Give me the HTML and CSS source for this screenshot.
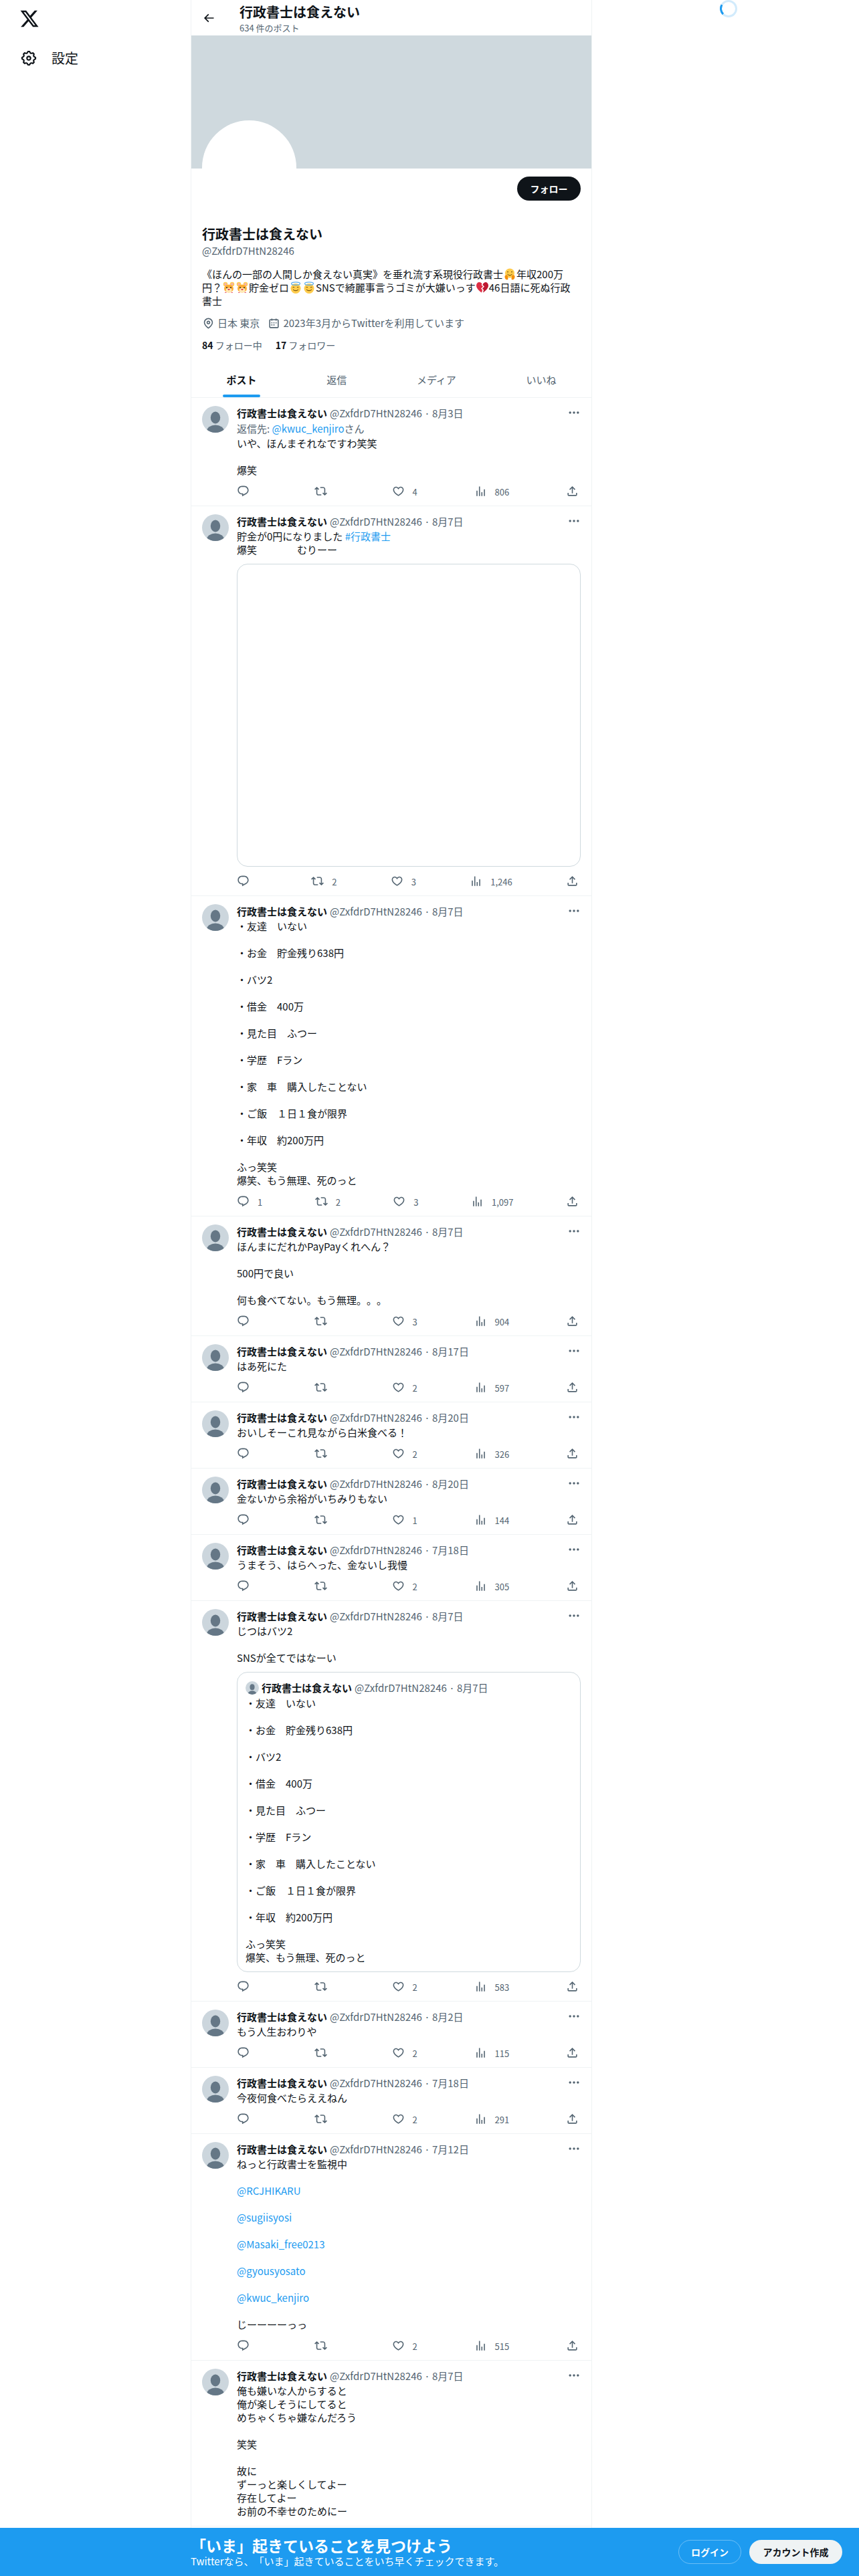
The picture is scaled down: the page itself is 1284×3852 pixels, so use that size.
FILE: index.html
```html
<!DOCTYPE html>
<html lang="ja">
<head>
    <meta charset="UTF-8">
    <meta name="viewport" content="width=device-width, initial-scale=1.0">
    <title>行政書士は食えない</title>
    <link rel="stylesheet" href="styles.css">
</head>
<body>
    <!-- icon sprite -->
    <svg class="sprite" aria-hidden="true">
        <symbol id="i-x" viewBox="0 0 24 24"><path d="M18.244 2.25h3.308l-7.227 8.26 8.502 11.24H16.17l-5.214-6.817L4.99 21.75H1.68l7.73-8.835L1.254 2.25H8.08l4.713 6.231zm-1.161 17.52h1.833L7.084 4.126H5.117z"/></symbol>
        <symbol id="i-gear" viewBox="0 0 24 24"><path d="M10.54 1.75h2.92l1.57 2.36c.11.17.32.25.53.21l2.53-.59 2.17 2.17-.58 2.54c-.05.2.04.41.21.53l2.36 1.57v2.92l-2.36 1.57c-.17.12-.26.33-.21.53l.58 2.54-2.17 2.17-2.53-.59c-.21-.04-.42.04-.53.21l-1.57 2.36h-2.92l-1.58-2.36c-.11-.17-.32-.25-.52-.21l-2.54.59-2.17-2.17.58-2.54c.05-.2-.03-.41-.21-.53l-2.35-1.57v-2.92L4.1 8.97c.18-.12.26-.33.21-.53L3.73 5.9 5.9 3.73l2.54.59c.2.04.41-.04.52-.21l1.58-2.36zm1.07 2l-.98 1.47C10.05 6.08 9 6.5 7.99 6.27l-1.46-.34-.6.6.33 1.46c.24 1.01-.18 2.07-1.05 2.64l-1.46.98v.78l1.46.98c.87.57 1.29 1.63 1.05 2.64l-.33 1.46.6.6 1.46-.34c1.01-.23 2.06.19 2.64 1.05l.98 1.47h.78l.97-1.47c.58-.86 1.63-1.28 2.65-1.05l1.45.34.61-.6-.34-1.46c-.23-1.01.18-2.07 1.05-2.64l1.47-.98v-.78l-1.47-.98c-.87-.57-1.28-1.63-1.05-2.64l.34-1.46-.61-.6-1.45.34c-1.02.23-2.07-.19-2.65-1.05l-.97-1.47h-.78zM12 10.5c-.83 0-1.5.67-1.5 1.5s.67 1.5 1.5 1.5c.82 0 1.5-.67 1.5-1.5s-.68-1.5-1.5-1.5zM8.5 12c0-1.93 1.56-3.5 3.5-3.5 1.93 0 3.5 1.57 3.5 3.5s-1.57 3.5-3.5 3.5c-1.94 0-3.5-1.57-3.5-3.5z"/></symbol>
        <symbol id="i-back" viewBox="0 0 24 24"><path d="M7.414 13l5.043 5.04-1.414 1.42L3.586 12l7.457-7.46 1.414 1.42L7.414 11H21v2H7.414z"/></symbol>
        <symbol id="i-pin" viewBox="0 0 24 24"><path d="M12 7c-1.93 0-3.5 1.57-3.5 3.5S10.07 14 12 14s3.5-1.57 3.5-3.5S13.93 7 12 7zm0 5c-.827 0-1.5-.673-1.5-1.5S11.173 9 12 9s1.5.673 1.5 1.5S12.827 12 12 12zm0-10c-4.687 0-8.5 3.813-8.5 8.5 0 5.967 7.621 11.116 7.945 11.332l.555.37.555-.37c.324-.216 7.945-5.365 7.945-11.332C20.5 5.813 16.687 2 12 2zm0 17.77c-1.665-1.241-6.5-5.196-6.5-9.27C5.5 6.916 8.416 4 12 4s6.5 2.916 6.5 6.5c0 4.073-4.835 8.028-6.5 9.27z"/></symbol>
        <symbol id="i-cal" viewBox="0 0 24 24"><path d="M7 4V3h2v1h6V3h2v1h1.5C19.89 4 21 5.12 21 6.5v12c0 1.38-1.11 2.5-2.5 2.5h-13C4.12 21 3 19.88 3 18.5v-12C3 5.12 4.12 4 5.5 4H7zm0 2H5.5c-.27 0-.5.22-.5.5v12c0 .28.23.5.5.5h13c.28 0 .5-.22.5-.5v-12c0-.28-.22-.5-.5-.5H17v1h-2V6H9v1H7V6zm0 6h2v-2H7v2zm0 4h2v-2H7v2zm4-4h2v-2h-2v2zm0 4h2v-2h-2v2zm4-4h2v-2h-2v2z"/></symbol>
        <symbol id="i-reply" viewBox="0 0 24 24"><path d="M1.751 10c0-4.42 3.584-8 8.005-8h4.366c4.49 0 8.129 3.64 8.129 8.13 0 2.96-1.607 5.68-4.196 7.11l-8.054 4.46v-3.69h-.067c-4.49.1-8.183-3.51-8.183-8.01zm8.005-6c-3.317 0-6.005 2.69-6.005 6 0 3.37 2.77 6.08 6.138 6.01l.351-.01h1.761v2.3l5.087-2.81c1.951-1.08 3.163-3.13 3.163-5.36 0-3.39-2.744-6.13-6.129-6.13H9.756z"/></symbol>
        <symbol id="i-rt" viewBox="0 0 24 24"><path d="M4.5 3.88l4.432 4.14-1.364 1.46L5.5 7.55V16c0 1.1.896 2 2 2H13v2H7.5c-2.209 0-4-1.79-4-4V7.55L1.432 9.48.068 8.02 4.5 3.88zM16.5 6H11V4h5.5c2.209 0 4 1.79 4 4v8.45l2.068-1.93 1.364 1.46-4.432 4.14-4.432-4.14 1.364-1.46 2.068 1.93V8c0-1.1-.896-2-2-2z"/></symbol>
        <symbol id="i-like" viewBox="0 0 24 24"><path d="M16.697 5.5c-1.222-.06-2.679.51-3.89 2.16l-.805 1.09-.806-1.09C9.984 6.01 8.526 5.44 7.304 5.5c-1.243.07-2.349.78-2.91 1.91-.552 1.12-.633 2.78.479 4.82 1.074 1.97 3.257 4.27 7.129 6.61 3.87-2.34 6.052-4.64 7.126-6.61 1.111-2.04 1.03-3.7.477-4.82-.561-1.13-1.666-1.84-2.908-1.91zm4.187 7.69c-1.351 2.48-4.001 5.12-8.379 7.67l-.503.3-.504-.3c-4.379-2.55-7.029-5.19-8.382-7.67-1.36-2.5-1.41-4.86-.514-6.67.887-1.79 2.647-2.91 4.601-3.01 1.651-.09 3.368.56 4.798 2.01 1.429-1.45 3.146-2.1 4.796-2.01 1.954.1 3.714 1.22 4.601 3.01.896 1.81.846 4.17-.514 6.67z"/></symbol>
        <symbol id="i-views" viewBox="0 0 24 24"><path d="M8.75 21V3h2v18h-2zM18 21V8.5h2V21h-2zM4 21l.004-10h2L6 21H4zm9.248 0v-7h2v7h-2z"/></symbol>
        <symbol id="i-share" viewBox="0 0 24 24"><path d="M12 2.59l5.7 5.7-1.41 1.42L13 6.41V16h-2V6.41l-3.3 3.3-1.41-1.42L12 2.59zM21 15l-.02 3.51c0 1.38-1.12 2.49-2.5 2.49H5.5C4.11 21 3 19.88 3 18.5V15h2v3.5c0 .28.22.5.5.5h12.98c.28 0 .5-.22.5-.5L19 15h2z"/></symbol>
        <symbol id="i-dots" viewBox="0 0 24 24"><path d="M3 12c0-1.1.9-2 2-2s2 .9 2 2-.9 2-2 2-2-.9-2-2zm9 2c1.1 0 2-.9 2-2s-.9-2-2-2-2 .9-2 2 .9 2 2 2zm7 0c1.1 0 2-.9 2-2s-.9-2-2-2-2 .9-2 2 .9 2 2 2z"/></symbol>
        <symbol id="i-user" viewBox="0 0 40 40"><rect width="40" height="40" fill="#ccd6dd"/><ellipse cx="20" cy="17.5" rx="7.2" ry="9" fill="#657786"/><ellipse cx="20" cy="38" rx="13" ry="9.5" fill="#657786"/></symbol>
        <symbol id="e-hug" viewBox="0 0 36 36"><circle cx="18" cy="15" r="14" fill="#ffcc4d"/><path d="M10 12q2-3 4 0M22 12q2-3 4 0M11 18q7 7 14 0" fill="none" stroke="#664500" stroke-width="2"/><path d="M3 25c0-6 8-6 9-1l1 8c0 4-10 4-10-7zM33 25c0-6-8-6-9-1l-1 8c0 4 10 4 10-7z" fill="#f4900c"/></symbol>
        <symbol id="e-ham" viewBox="0 0 36 36"><circle cx="8" cy="8" r="6.5" fill="#ffcc4d"/><circle cx="28" cy="8" r="6.5" fill="#ffcc4d"/><circle cx="8" cy="8" r="3.5" fill="#f4abba"/><circle cx="28" cy="8" r="3.5" fill="#f4abba"/><ellipse cx="18" cy="21" rx="14" ry="12" fill="#ffac33"/><ellipse cx="18" cy="26" rx="9" ry="7" fill="#ffe8b6"/><circle cx="12" cy="18" r="2" fill="#292f33"/><circle cx="24" cy="18" r="2" fill="#292f33"/><path d="M15 23h6l-3 3zM6 33h5M25 33h5" fill="#dd2e44" stroke="#dd2e44" stroke-width="1.5"/></symbol>
        <symbol id="e-angel" viewBox="0 0 36 36"><circle cx="18" cy="21" r="15" fill="#ffcc4d"/><ellipse cx="18" cy="6" rx="13" ry="4.5" fill="none" stroke="#5dadec" stroke-width="2.5"/><path d="M9 18q2.5-3 5 0M22 18q2.5-3 5 0M10 24q8 7 16 0" fill="none" stroke="#664500" stroke-width="2"/></symbol>
        <symbol id="e-heart" viewBox="0 0 36 36"><path d="M17 7C14 2 10 2 8 2 4 2 0 6 0 12c0 9 10 17 16 21l2-8-4-4 6-6-5-5z" fill="#dd2e44"/><path d="M20 7c3-4 6-5 8-5 4 0 8 4 8 10 0 9-10 17-16 21l2-8-4-4 6-6-5-5z" fill="#be1931"/></symbol>
    </svg>

    <div class="layout">
        <aside class="side">
            <svg class="logo"><use href="#i-x"/></svg>
            <div class="nav-item">
                <svg class="nav-icon"><use href="#i-gear"/></svg>
                <span>設定</span>
            </div>
        </aside>

        <main class="column">
            <header class="top">
                <svg class="back"><use href="#i-back"/></svg>
                <div>
                    <div class="top-name">行政書士は食えない</div>
                    <div class="top-sub">634 件のポスト</div>
                </div>
            </header>

            <div class="banner"></div>
            <div class="big-avatar"></div>

            <section class="profile">
                <div class="follow-row"><span class="follow-btn">フォロー</span></div>
                <div class="p-name">行政書士は食えない</div>
                <div class="p-handle">@ZxfdrD7HtN28246</div>
                <div class="p-bio">《ほんの一部の人間しか食えない真実》を垂れ流す系現役行政書士<svg class="emoji"><use href="#e-hug"/></svg>年収200万円？<svg class="emoji"><use href="#e-ham"/></svg><svg class="emoji"><use href="#e-ham"/></svg>貯金ゼロ<svg class="emoji"><use href="#e-angel"/></svg><svg class="emoji"><use href="#e-angel"/></svg>SNSで綺麗事言うゴミが大嫌いっす<svg class="emoji"><use href="#e-heart"/></svg>46日語に死ぬ行政<br>書士</div>
                <div class="p-meta">
                    <svg class="meta-icon"><use href="#i-pin"/></svg><span class="meta-text">日本 東京</span>
                    <svg class="meta-icon"><use href="#i-cal"/></svg><span class="meta-text">2023年3月からTwitterを利用しています</span>
                </div>
                <div class="p-follow">
                    <span class="p-count"><b>84</b> フォロー中</span>
                    <span class="p-count"><b>17</b> フォロワー</span>
                </div>
            </section>

            <nav class="tabs">
                <div class="tab active">ポスト</div>
                <div class="tab">返信</div>
                <div class="tab">メディア</div>
                <div class="tab">いいね</div>
            </nav>

            <article class="tweet">
                <svg class="avatar"><use href="#i-user"/></svg>
                <div class="tweet-main">
                    <div class="tweet-head">
                        <div class="tweet-who"><span class="name">行政書士は食えない</span><span class="gray">@ZxfdrD7HtN28246 · 8月3日</span></div>
                        <svg class="more"><use href="#i-dots"/></svg>
                    </div>
                    <div class="reply-to">返信先: <span class="link">@kwuc_kenjiro</span>さん</div>
                    <div class="text">いや、ほんまそれなですわ笑笑

爆笑</div>
                    <div class="actions">
                        <div class="act"><svg><use href="#i-reply"/></svg><span class="count"></span></div>
                        <div class="act"><svg><use href="#i-rt"/></svg><span class="count"></span></div>
                        <div class="act"><svg><use href="#i-like"/></svg><span class="count">4</span></div>
                        <div class="act"><svg><use href="#i-views"/></svg><span class="count">806</span></div>
                        <div class="act share"><svg><use href="#i-share"/></svg></div>
                    </div>
                </div>
            </article>

            <article class="tweet">
                <svg class="avatar"><use href="#i-user"/></svg>
                <div class="tweet-main">
                    <div class="tweet-head">
                        <div class="tweet-who"><span class="name">行政書士は食えない</span><span class="gray">@ZxfdrD7HtN28246 · 8月7日</span></div>
                        <svg class="more"><use href="#i-dots"/></svg>
                    </div>
                    <div class="text">貯金が0円になりました <span class="link">#行政書士</span>
爆笑　　　　むりーー</div>
                    <div class="media"></div>
                    <div class="actions">
                        <div class="act"><svg><use href="#i-reply"/></svg><span class="count"></span></div>
                        <div class="act"><svg><use href="#i-rt"/></svg><span class="count">2</span></div>
                        <div class="act"><svg><use href="#i-like"/></svg><span class="count">3</span></div>
                        <div class="act"><svg><use href="#i-views"/></svg><span class="count">1,246</span></div>
                        <div class="act share"><svg><use href="#i-share"/></svg></div>
                    </div>
                </div>
            </article>

            <article class="tweet">
                <svg class="avatar"><use href="#i-user"/></svg>
                <div class="tweet-main">
                    <div class="tweet-head">
                        <div class="tweet-who"><span class="name">行政書士は食えない</span><span class="gray">@ZxfdrD7HtN28246 · 8月7日</span></div>
                        <svg class="more"><use href="#i-dots"/></svg>
                    </div>
                    <div class="text">・友達　いない

・お金　貯金残り638円

・バツ2

・借金　400万

・見た目　ふつー

・学歴　Fラン

・家　車　購入したことない

・ご飯　１日１食が限界

・年収　約200万円

ふっ笑笑
爆笑、もう無理、死のっと</div>
                    <div class="actions">
                        <div class="act"><svg><use href="#i-reply"/></svg><span class="count">1</span></div>
                        <div class="act"><svg><use href="#i-rt"/></svg><span class="count">2</span></div>
                        <div class="act"><svg><use href="#i-like"/></svg><span class="count">3</span></div>
                        <div class="act"><svg><use href="#i-views"/></svg><span class="count">1,097</span></div>
                        <div class="act share"><svg><use href="#i-share"/></svg></div>
                    </div>
                </div>
            </article>

            <article class="tweet">
                <svg class="avatar"><use href="#i-user"/></svg>
                <div class="tweet-main">
                    <div class="tweet-head">
                        <div class="tweet-who"><span class="name">行政書士は食えない</span><span class="gray">@ZxfdrD7HtN28246 · 8月7日</span></div>
                        <svg class="more"><use href="#i-dots"/></svg>
                    </div>
                    <div class="text">ほんまにだれかPayPayくれへん？

500円で良い

何も食べてない。もう無理。。。</div>
                    <div class="actions">
                        <div class="act"><svg><use href="#i-reply"/></svg><span class="count"></span></div>
                        <div class="act"><svg><use href="#i-rt"/></svg><span class="count"></span></div>
                        <div class="act"><svg><use href="#i-like"/></svg><span class="count">3</span></div>
                        <div class="act"><svg><use href="#i-views"/></svg><span class="count">904</span></div>
                        <div class="act share"><svg><use href="#i-share"/></svg></div>
                    </div>
                </div>
            </article>

            <article class="tweet">
                <svg class="avatar"><use href="#i-user"/></svg>
                <div class="tweet-main">
                    <div class="tweet-head">
                        <div class="tweet-who"><span class="name">行政書士は食えない</span><span class="gray">@ZxfdrD7HtN28246 · 8月17日</span></div>
                        <svg class="more"><use href="#i-dots"/></svg>
                    </div>
                    <div class="text">はあ死にた</div>
                    <div class="actions">
                        <div class="act"><svg><use href="#i-reply"/></svg><span class="count"></span></div>
                        <div class="act"><svg><use href="#i-rt"/></svg><span class="count"></span></div>
                        <div class="act"><svg><use href="#i-like"/></svg><span class="count">2</span></div>
                        <div class="act"><svg><use href="#i-views"/></svg><span class="count">597</span></div>
                        <div class="act share"><svg><use href="#i-share"/></svg></div>
                    </div>
                </div>
            </article>

            <article class="tweet">
                <svg class="avatar"><use href="#i-user"/></svg>
                <div class="tweet-main">
                    <div class="tweet-head">
                        <div class="tweet-who"><span class="name">行政書士は食えない</span><span class="gray">@ZxfdrD7HtN28246 · 8月20日</span></div>
                        <svg class="more"><use href="#i-dots"/></svg>
                    </div>
                    <div class="text">おいしそーこれ見ながら白米食べる！</div>
                    <div class="actions">
                        <div class="act"><svg><use href="#i-reply"/></svg><span class="count"></span></div>
                        <div class="act"><svg><use href="#i-rt"/></svg><span class="count"></span></div>
                        <div class="act"><svg><use href="#i-like"/></svg><span class="count">2</span></div>
                        <div class="act"><svg><use href="#i-views"/></svg><span class="count">326</span></div>
                        <div class="act share"><svg><use href="#i-share"/></svg></div>
                    </div>
                </div>
            </article>

            <article class="tweet">
                <svg class="avatar"><use href="#i-user"/></svg>
                <div class="tweet-main">
                    <div class="tweet-head">
                        <div class="tweet-who"><span class="name">行政書士は食えない</span><span class="gray">@ZxfdrD7HtN28246 · 8月20日</span></div>
                        <svg class="more"><use href="#i-dots"/></svg>
                    </div>
                    <div class="text">金ないから余裕がいちみりもない</div>
                    <div class="actions">
                        <div class="act"><svg><use href="#i-reply"/></svg><span class="count"></span></div>
                        <div class="act"><svg><use href="#i-rt"/></svg><span class="count"></span></div>
                        <div class="act"><svg><use href="#i-like"/></svg><span class="count">1</span></div>
                        <div class="act"><svg><use href="#i-views"/></svg><span class="count">144</span></div>
                        <div class="act share"><svg><use href="#i-share"/></svg></div>
                    </div>
                </div>
            </article>

            <article class="tweet">
                <svg class="avatar"><use href="#i-user"/></svg>
                <div class="tweet-main">
                    <div class="tweet-head">
                        <div class="tweet-who"><span class="name">行政書士は食えない</span><span class="gray">@ZxfdrD7HtN28246 · 7月18日</span></div>
                        <svg class="more"><use href="#i-dots"/></svg>
                    </div>
                    <div class="text">うまそう、はらへった、金ないし我慢</div>
                    <div class="actions">
                        <div class="act"><svg><use href="#i-reply"/></svg><span class="count"></span></div>
                        <div class="act"><svg><use href="#i-rt"/></svg><span class="count"></span></div>
                        <div class="act"><svg><use href="#i-like"/></svg><span class="count">2</span></div>
                        <div class="act"><svg><use href="#i-views"/></svg><span class="count">305</span></div>
                        <div class="act share"><svg><use href="#i-share"/></svg></div>
                    </div>
                </div>
            </article>

            <article class="tweet">
                <svg class="avatar"><use href="#i-user"/></svg>
                <div class="tweet-main">
                    <div class="tweet-head">
                        <div class="tweet-who"><span class="name">行政書士は食えない</span><span class="gray">@ZxfdrD7HtN28246 · 8月7日</span></div>
                        <svg class="more"><use href="#i-dots"/></svg>
                    </div>
                    <div class="text">じつはバツ2

SNSが全てではなーい</div>
                    <div class="quote">
                        <div class="quote-head"><svg class="mini-avatar"><use href="#i-user"/></svg><span class="name">行政書士は食えない</span><span class="gray">@ZxfdrD7HtN28246 · 8月7日</span></div>
                        <div class="text">・友達　いない

・お金　貯金残り638円

・バツ2

・借金　400万

・見た目　ふつー

・学歴　Fラン

・家　車　購入したことない

・ご飯　１日１食が限界

・年収　約200万円

ふっ笑笑
爆笑、もう無理、死のっと</div>
                    </div>
                    <div class="actions">
                        <div class="act"><svg><use href="#i-reply"/></svg><span class="count"></span></div>
                        <div class="act"><svg><use href="#i-rt"/></svg><span class="count"></span></div>
                        <div class="act"><svg><use href="#i-like"/></svg><span class="count">2</span></div>
                        <div class="act"><svg><use href="#i-views"/></svg><span class="count">583</span></div>
                        <div class="act share"><svg><use href="#i-share"/></svg></div>
                    </div>
                </div>
            </article>

            <article class="tweet">
                <svg class="avatar"><use href="#i-user"/></svg>
                <div class="tweet-main">
                    <div class="tweet-head">
                        <div class="tweet-who"><span class="name">行政書士は食えない</span><span class="gray">@ZxfdrD7HtN28246 · 8月2日</span></div>
                        <svg class="more"><use href="#i-dots"/></svg>
                    </div>
                    <div class="text">もう人生おわりや</div>
                    <div class="actions">
                        <div class="act"><svg><use href="#i-reply"/></svg><span class="count"></span></div>
                        <div class="act"><svg><use href="#i-rt"/></svg><span class="count"></span></div>
                        <div class="act"><svg><use href="#i-like"/></svg><span class="count">2</span></div>
                        <div class="act"><svg><use href="#i-views"/></svg><span class="count">115</span></div>
                        <div class="act share"><svg><use href="#i-share"/></svg></div>
                    </div>
                </div>
            </article>

            <article class="tweet">
                <svg class="avatar"><use href="#i-user"/></svg>
                <div class="tweet-main">
                    <div class="tweet-head">
                        <div class="tweet-who"><span class="name">行政書士は食えない</span><span class="gray">@ZxfdrD7HtN28246 · 7月18日</span></div>
                        <svg class="more"><use href="#i-dots"/></svg>
                    </div>
                    <div class="text">今夜何食べたらええねん</div>
                    <div class="actions">
                        <div class="act"><svg><use href="#i-reply"/></svg><span class="count"></span></div>
                        <div class="act"><svg><use href="#i-rt"/></svg><span class="count"></span></div>
                        <div class="act"><svg><use href="#i-like"/></svg><span class="count">2</span></div>
                        <div class="act"><svg><use href="#i-views"/></svg><span class="count">291</span></div>
                        <div class="act share"><svg><use href="#i-share"/></svg></div>
                    </div>
                </div>
            </article>

            <article class="tweet">
                <svg class="avatar"><use href="#i-user"/></svg>
                <div class="tweet-main">
                    <div class="tweet-head">
                        <div class="tweet-who"><span class="name">行政書士は食えない</span><span class="gray">@ZxfdrD7HtN28246 · 7月12日</span></div>
                        <svg class="more"><use href="#i-dots"/></svg>
                    </div>
                    <div class="text">ねっと行政書士を監視中

<span class="link">@RCJHIKARU</span>

<span class="link">@sugiisyosi</span>

<span class="link">@Masaki_free0213</span>

<span class="link">@gyousyosato</span>

<span class="link">@kwuc_kenjiro</span>

じーーーーっっ</div>
                    <div class="actions">
                        <div class="act"><svg><use href="#i-reply"/></svg><span class="count"></span></div>
                        <div class="act"><svg><use href="#i-rt"/></svg><span class="count"></span></div>
                        <div class="act"><svg><use href="#i-like"/></svg><span class="count">2</span></div>
                        <div class="act"><svg><use href="#i-views"/></svg><span class="count">515</span></div>
                        <div class="act share"><svg><use href="#i-share"/></svg></div>
                    </div>
                </div>
            </article>

            <article class="tweet">
                <svg class="avatar"><use href="#i-user"/></svg>
                <div class="tweet-main">
                    <div class="tweet-head">
                        <div class="tweet-who"><span class="name">行政書士は食えない</span><span class="gray">@ZxfdrD7HtN28246 · 8月7日</span></div>
                        <svg class="more"><use href="#i-dots"/></svg>
                    </div>
                    <div class="text">俺も嫌いな人からすると
俺が楽しそうにしてると
めちゃくちゃ嫌なんだろう

笑笑

故に
ずーっと楽しくしてよー
存在してよー
お前の不幸せのためにー</div>
                </div>
            </article>
        </main>

        <aside class="right">
            <svg class="spinner" viewBox="0 0 26 26">
                <circle cx="13" cy="13" r="11.5" fill="none" stroke="#d2ebfc" stroke-width="3"/>
                <path d="M3 7.3A11.5 11.5 0 0 0 4.9 21.1" fill="none" stroke="#1d9bf0" stroke-width="3"/>
            </svg>
        </aside>
    </div>

    <footer class="signup-bar">
        <div>
            <div class="bar-title">「いま」起きていることを見つけよう</div>
            <div class="bar-sub">Twitterなら、「いま」起きていることをいち早くチェックできます。</div>
        </div>
        <div class="bar-buttons">
            <span class="btn-login">ログイン</span>
            <span class="btn-signup">アカウント作成</span>
        </div>
    </footer>
</body>
</html>
```

FILE: styles.css
```css
html, body {
  margin: 0;
  height: 3852px;
  overflow: hidden;
  background: #fff;
}

body {
  font-family: "Noto Sans CJK JP", "Noto Sans", sans-serif;
  font-size: 15px;
  line-height: 20px;
  color: #0f1419;
  text-spacing-trim: space-all;
}

.sprite {
  position: absolute;
  width: 0;
  height: 0;
}

.layout {
  display: grid;
  grid-template-columns: 285px 600px 1fr;
  height: 3852px;
  overflow: hidden;
}

/* left nav */
.logo {
  display: block;
  width: 30px;
  height: 30px;
  margin: 13px 0 0 29px;
  fill: #0f1419;
}

.nav-item {
  display: flex;
  align-items: center;
  margin: 31px 0 0 30px;
  font-size: 20px;
  line-height: 26px;
}

.nav-icon {
  width: 26px;
  height: 26px;
  margin-right: 21px;
  fill: #0f1419;
}

/* main column */
.column {
  position: relative;
  border-left: 1px solid #eff3f4;
  border-right: 1px solid #eff3f4;
}

.top {
  display: flex;
  height: 53px;
  padding-left: 16px;
}

.back {
  width: 20px;
  height: 20px;
  margin: 17px 36px 0 0;
  fill: #0f1419;
}

.top-name {
  margin-top: 6px;
  font-size: 20px;
  font-weight: 700;
  line-height: 24px;
}

.top-sub {
  margin-top: 4px;
  font-size: 13px;
  line-height: 16px;
  color: #536471;
}

.banner {
  height: 199px;
  background: #cfd9de;
}

.big-avatar {
  position: absolute;
  top: 180px;
  left: 16px;
  width: 141px;
  height: 141px;
  border-radius: 50%;
  background: #fff;
}

.profile {
  padding: 12px 16px 0;
}

.follow-row {
  display: flex;
  justify-content: flex-end;
}

.follow-btn {
  width: 95px;
  height: 36px;
  border-radius: 18px;
  background: #0f1419;
  color: #fff;
  font-size: 14px;
  font-weight: 700;
  line-height: 36px;
  text-align: center;
}

.p-name {
  margin-top: 38px;
  font-size: 20px;
  font-weight: 700;
  line-height: 24px;
}

.p-handle {
  margin-top: 3px;
  color: #536471;
}

.p-bio {
  margin-top: 15px;
}

.emoji {
  width: 18px;
  height: 18px;
  margin: 0 1px;
  vertical-align: -3px;
}

.p-meta {
  display: flex;
  align-items: center;
  margin-top: 13px;
  color: #536471;
}

.meta-icon {
  width: 19px;
  height: 19px;
  margin-right: 4px;
  fill: #536471;
}

.meta-text {
  margin-right: 12px;
}

.p-follow {
  display: flex;
  gap: 20px;
  margin-top: 13px;
  font-size: 14px;
  color: #536471;
}

.p-count b {
  color: #0f1419;
  font-weight: 700;
}

.tabs {
  display: flex;
  height: 53px;
  margin-top: 15px;
  border-bottom: 1px solid #eff3f4;
}

.tab {
  position: relative;
  flex: 1 1 auto;
  line-height: 53px;
  text-align: center;
  color: #536471;
}

.tab.active {
  color: #0f1419;
  font-weight: 700;
}

.tab.active::after {
  content: "";
  position: absolute;
  left: 50%;
  bottom: 0;
  width: 56px;
  height: 4px;
  margin-left: -28px;
  border-radius: 2px;
  background: #1d9bf0;
}

/* tweets */
.tweet {
  display: flex;
  gap: 12px;
  padding: 12px 16px;
  border-bottom: 1px solid #eff3f4;
}

.avatar {
  flex: none;
  width: 40px;
  height: 40px;
  border-radius: 50%;
}

.tweet-main {
  flex: 1;
  min-width: 0;
}

.tweet-head {
  display: flex;
  justify-content: space-between;
  height: 21px;
}

.tweet-who {
  line-height: 21px;
}

.name {
  margin-right: 4px;
  font-weight: 700;
}

.gray {
  color: #536471;
}

.more {
  width: 20px;
  height: 20px;
  fill: #536471;
}

.reply-to {
  margin-top: 3px;
  color: #536471;
}

.link {
  color: #1d9bf0;
}

.text {
  margin-top: 2px;
  white-space: pre-wrap;
}

.media {
  height: 451px;
  margin-top: 11px;
  border: 1px solid #cfd9de;
  border-radius: 16px;
}

.quote {
  margin-top: 11px;
  padding: 12px 12px 11px;
  border: 1px solid #cfd9de;
  border-radius: 16px;
}

.quote-head {
  display: flex;
  align-items: center;
  height: 21px;
  margin-bottom: 3px;
  line-height: 21px;
}

.mini-avatar {
  width: 20px;
  height: 20px;
  margin-right: 4px;
  border-radius: 50%;
}

.actions {
  display: flex;
  justify-content: space-between;
  height: 20px;
  margin-top: 11px;
}

.act {
  display: flex;
  align-items: center;
}

.act svg {
  width: 19px;
  height: 19px;
  fill: #536471;
}

.act.share {
  width: 22px;
}

.count {
  padding: 3px 0 0 12px;
  font-size: 13px;
  line-height: 16px;
  color: #536471;
}

/* right column */
.spinner {
  display: block;
  width: 26px;
  height: 26px;
  margin-left: 191px;
}

/* bottom signup bar */
.signup-bar {
  position: fixed;
  left: 0;
  right: 0;
  bottom: 0;
  display: flex;
  justify-content: space-between;
  align-items: center;
  height: 72px;
  padding: 0 25px 0 285px;
  background: #1d9bf0;
  color: #fff;
}

.bar-title {
  font-size: 23px;
  font-weight: 700;
  line-height: 28px;
}

.bar-sub {
  line-height: 20px;
}

.bar-buttons {
  display: flex;
  gap: 12px;
}

.btn-login,
.btn-signup {
  height: 36px;
  box-sizing: border-box;
  border-radius: 18px;
  font-size: 14px;
  font-weight: 700;
  line-height: 34px;
  text-align: center;
}

.btn-login {
  width: 94px;
  border: 1px solid rgba(255, 255, 255, 0.35);
}

.btn-signup {
  width: 139px;
  line-height: 36px;
  background: #eff3f4;
  color: #0f1419;
}
```
